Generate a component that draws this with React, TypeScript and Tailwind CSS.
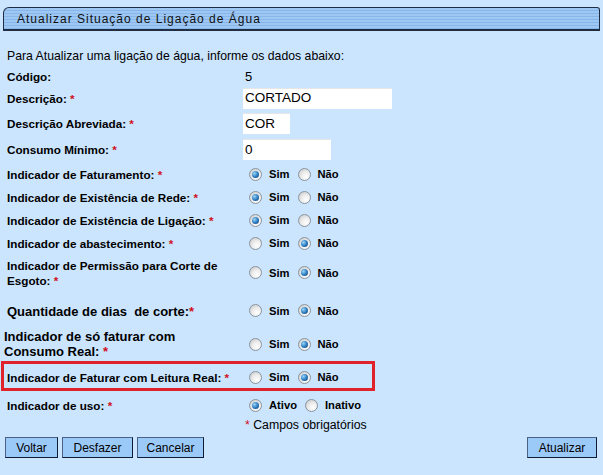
import React from "react";

const font = "font-['Liberation_Sans',Arial,sans-serif]";

function Radio({ checked }: { checked: boolean }) {
  return (
    <span className="inline-flex h-[13px] w-[13px] shrink-0 items-center justify-center rounded-full border border-[#8a949e] bg-[radial-gradient(circle_at_65%_70%,#ffffff_0%,#ececec_45%,#c2c2c2_100%)]">
      {checked && (
        <span className="h-[7px] w-[7px] rounded-full bg-[radial-gradient(circle_at_35%_35%,#9ad6f7_0%,#2f7fc4_50%,#0f3766_100%)]" />
      )}
    </span>
  );
}

function Choice({ options, value }: { options: string[]; value: number }) {
  return (
    <div className="flex items-center pl-[6px] text-[11.2px] font-bold">
      {options.map((o, i) => (
        <span key={o} className={i > 0 ? "ml-[8px] flex items-center" : "flex items-center"}>
          <Radio checked={i === value} />
          <span className="ml-[7px]">{o}</span>
        </span>
      ))}
    </div>
  );
}

function Req() {
  return <span className="text-[#d01020]"> *</span>;
}

function Row({
  h,
  label,
  children,
  labelClass = "text-[11.7px]",
  valueClass = "",
}: {
  h: string;
  label: React.ReactNode;
  children?: React.ReactNode;
  labelClass?: string;
  valueClass?: string;
}) {
  return (
    <div className={`grid grid-cols-[236px_1fr] items-center pl-[7px] ${h}`}>
      <div className={`font-bold leading-[15px] ${labelClass}`}>{label}</div>
      <div className={valueClass}>{children}</div>
    </div>
  );
}

function Field({ value, w }: { value: string; w: string }) {
  return (
    <div className={`flex h-[21px] items-center border-t border-[#e6e6e6] bg-white pl-[2px] text-[13.5px] ${w}`}>
      {value}
    </div>
  );
}

const simNao = ["Sim", "Não"];

export default function App() {
  return (
    <div className={`${font} h-[475px] w-[603px] overflow-hidden bg-[#cbe5fe] text-black`}>
      {/* cabeçalho */}
      <div className="px-[3px] pt-[7px]">
        <div className="flex h-[24px] items-center rounded-tl-[6px] rounded-tr-[3px] border border-b-2 border-[#1e2c44] bg-[repeating-linear-gradient(180deg,#9ec8f3_0px,#9ec8f3_2px,#86b6ea_2px,#86b6ea_3px)] pl-[13px] text-[12px] tracking-[1px] text-[#111]">
          Atualizar Situação de Ligação de Água
        </div>
      </div>

      <div className="mt-[17px] flex h-[16px] items-center pl-[7px] text-[12.25px]">
        Para Atualizar uma ligação de água, informe os dados abaixo:
      </div>

      <Row h="h-[21px]" label="Código:">
        <span className="pl-[2px] text-[13px]">5</span>
      </Row>
      <Row h="h-[26px]" label={<>Descrição:<Req /></>}>
        <Field value="CORTADO" w="w-[149px]" />
      </Row>
      <Row h="h-[25px]" label={<>Descrição Abreviada:<Req /></>}>
        <Field value="COR" w="w-[47px]" />
      </Row>
      <Row h="h-[27px]" label={<>Consumo Mínimo:<Req /></>}>
        <Field value="0" w="w-[88px]" />
      </Row>
      <Row h="h-[23px]" label={<>Indicador de Faturamento:<Req /></>}>
        <Choice options={simNao} value={0} />
      </Row>
      <Row h="h-[23px]" label={<>Indicador de Existência de Rede:<Req /></>}>
        <Choice options={simNao} value={0} />
      </Row>
      <Row h="h-[23px]" label={<>Indicador de Existência de Ligação:<Req /></>}>
        <Choice options={simNao} value={0} />
      </Row>
      <Row h="h-[23px]" label={<>Indicador de abastecimento:<Req /></>}>
        <Choice options={simNao} value={1} />
      </Row>
      <Row h="h-[36px]" label={<>Indicador de Permissão para Corte de Esgoto:<Req /></>}>
        <Choice options={simNao} value={1} />
      </Row>
      <Row
        h="h-[38px]"
        labelClass="text-[13px] pt-[2px]"
        label={<>Quantidade de dias&nbsp; de corte:<span className="text-[#d01020]">*</span></>}
        valueClass="pt-[2px]"
      >
        <Choice options={simNao} value={1} />
      </Row>
      <div className="grid h-[30px] grid-cols-[239px_1fr] pl-[4px]">
        <div className="text-[13px] font-bold leading-[15px]">
          Indicador de só faturar com
          <br />
          Consumo Real:<Req />
        </div>
        <div className="self-end pb-[6px]">
          <Choice options={simNao} value={1} />
        </div>
      </div>

      {/* destaque */}
      <div className="ml-[1px] mt-[2px] w-[374px] border-[3px] border-[#e0232b]">
        <div className="grid h-[24px] grid-cols-[236px_1fr] items-center pl-[3px] pt-[3px]">
          <div className="text-[11.7px] font-bold">
            Indicador de Faturar com Leitura Real:<Req />
          </div>
          <Choice options={simNao} value={1} />
        </div>
      </div>

      <Row h="h-[26px] pt-[3px]" label={<>Indicador de uso:<Req /></>}>
        <Choice options={["Ativo", "Inativo"]} value={0} />
      </Row>

      <div className="flex h-[16px] items-center pl-[245px] text-[12.3px]">
        <span className="text-[#d01020]">*</span>&nbsp;Campos obrigatórios
      </div>

      <div className="mt-[4px] flex h-[21px] items-stretch justify-between pl-[5px] pr-[6px] text-[12px]">
        <div className="flex gap-[4px]">
          <button className="w-[53px] border border-[#4a6286] border-b-[#0e1c34] border-r-[#0e1c34] bg-[#9ccaf8]">Voltar</button>
          <button className="w-[71px] border border-[#4a6286] border-b-[#0e1c34] border-r-[#0e1c34] bg-[#9ccaf8]">Desfazer</button>
          <button className="w-[67px] border border-[#4a6286] border-b-[#0e1c34] border-r-[#0e1c34] bg-[#9ccaf8]">Cancelar</button>
        </div>
        <button className="w-[70px] border border-[#4a6286] border-b-[#0e1c34] border-r-[#0e1c34] bg-[#9ccaf8]">Atualizar</button>
      </div>
    </div>
  );
}
